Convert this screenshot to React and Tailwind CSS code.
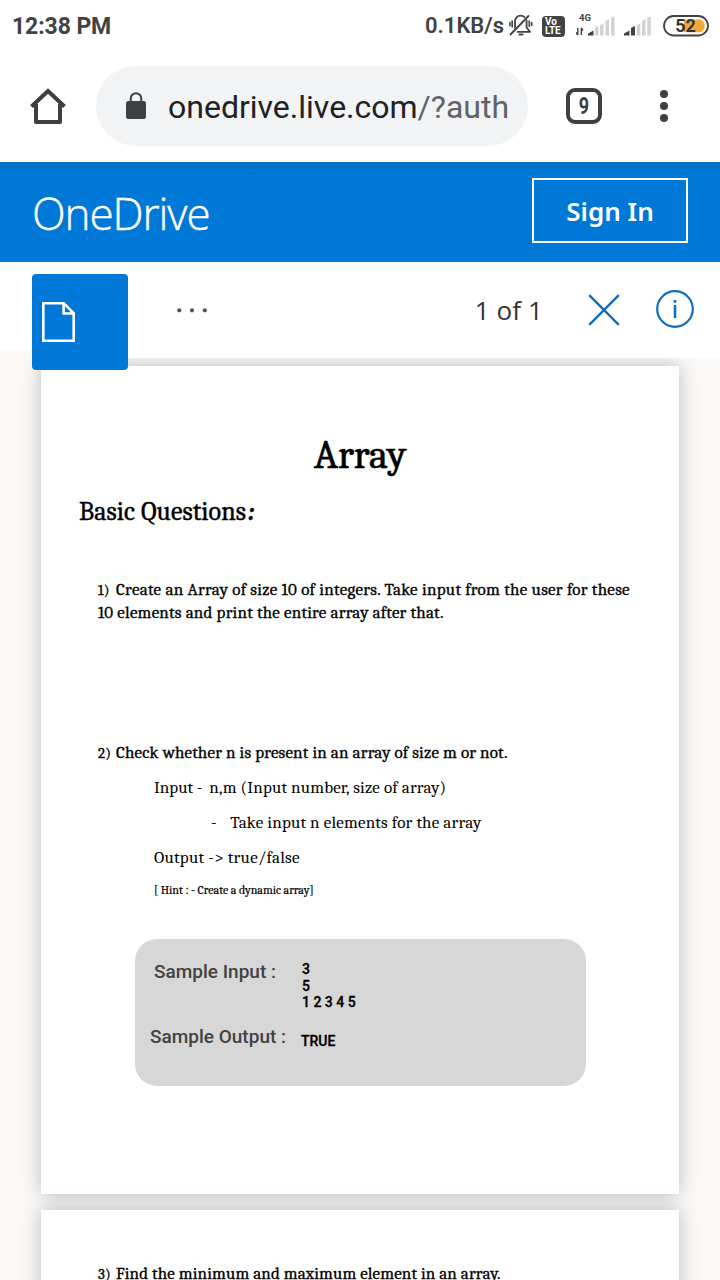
function StatusBar() {
  return (
    <div className="flex h-[52px] shrink-0 items-center pl-[12px] pr-[11px] font-['Roboto',sans-serif] font-medium text-[#424242]">
      <span className="text-[23px] font-bold leading-none tracking-[-0.1px]">12:38 PM</span>
      <span className="ml-auto text-[22px] font-semibold leading-none">0.1KB/s</span>
      <svg width="24" height="24" viewBox="0 0 24 24" className="-mt-[2px] ml-[5px] block" fill="none" stroke="#424242" strokeWidth="1.8" strokeLinecap="round" strokeLinejoin="round">
        <path d="M1.500 21.500 19.500 3" />
        <path d="M15.500 4.200C14.500 3.200 13 2.700 11.700 2.700 8.200 2.700 6 5.300 6 8.500V15M17.600 7.500v7l3.400 4.300H8.500" />
        <path d="M3.200 8v6M1 9.500v3.200M20.300 8v5.500M22.700 9.500v3" strokeWidth="1.600" />
        <path d="M10.500 21.500h3" strokeWidth="2.200" />
      </svg>
      <span className="ml-[9px] flex h-[21px] w-[23px] flex-col items-start justify-center rounded-[4px] bg-[#424242] pl-[3px] text-[10px] font-bold leading-[9px] text-white">
        <span>Vo</span>
        <span className="tracking-[-0.3px]">LTE</span>
      </span>
      <svg width="40" height="28" viewBox="0 0 40 28" className="-mt-[7px] ml-[11px] block">
        <text x="3" y="12" fontSize="9.500" fontWeight="700" fill="#424242" fontFamily="Roboto">4G</text>
        <path d="M1.800 19v7M0 23.500l1.800 2.500M5.300 26v-7M7 21.500l-1.800-2.500" stroke="#424242" strokeWidth="1.400" fill="none" />
        <path d="M12 26.500v-2l5.500-3v5z" fill="#424242" />
        <path d="M19 26.500v-8l3.500-1.500v9.500zM24 26.500v-10.500l3.500-1.500v12zM29.500 26.500v-14.500l3.500-2v16.500zM35 26.500v-17.500l3.500-2v19.500z" fill="#d2d2d2" />
      </svg>
      <svg width="28" height="28" viewBox="0 0 28 28" className="-mt-[7px] ml-[8px] block">
        <path d="M0 26.500v-2l5.500-3v5zM7 26.500v-7.500l4-2v9.500z" fill="#424242" />
        <path d="M12.800 26.500v-10.500l3.500-1.500v12zM18 26.500v-14.500l3.500-2v16.500zM23.300 26.500v-17.500l3.500-2v19.500z" fill="#d2d2d2" />
      </svg>
      <svg width="46" height="22" viewBox="0 0 46 22" className="-mt-[1px] ml-[11px] block">
        <path d="M21 4.500h14.500a6.400 6.400 0 0 1 0 12.800H21z" fill="#f5a934" />
        <rect x="1" y="1" width="44" height="19.500" rx="9.750" fill="none" stroke="#424242" strokeWidth="1.800" />
        <text x="22.500" y="17" textAnchor="middle" fontSize="18" fontWeight="700" fill="#333" fontFamily="Roboto">52</text>
      </svg>
    </div>
  );
}

function BrowserBar() {
  return (
    <div className="flex h-[110px] shrink-0 items-start pl-[30px] pt-[14px]">
      <svg width="36" height="38" viewBox="0 0 36 38" className="mt-[21px] block" fill="none" stroke="#3c4043" strokeWidth="4" strokeLinejoin="round">
        <path d="M1.500 19.500 18 4 34.500 19.500" strokeLinejoin="miter" />
        <path d="M6 17v18h24V17" />
      </svg>
      <div className="ml-[30px] flex h-[80px] w-[432px] items-center rounded-full bg-[#f1f3f4] pl-[30px]">
        <svg width="20" height="28" viewBox="0 0 20 28" className="block">
          <path d="M4.800 10V6.500a5.200 5.200 0 0 1 10.400 0V10" fill="none" stroke="#3c4043" strokeWidth="2" />
          <rect y="9" width="20" height="18" rx="2.500" fill="#3c4043" />
        </svg>
        <span className="ml-[22px] mt-[2px] whitespace-nowrap font-['Roboto',sans-serif] text-[32px] leading-none text-[#202124]">
          onedrive.live.com<span className="text-[#5f6368]">/?auth</span>
        </span>
      </div>
      <div className="ml-[38px] mt-[22px] flex h-[36px] w-[36px] items-center justify-center rounded-[9px] border-4 border-[#3c4043] font-['Roboto',sans-serif] text-[24px] font-bold leading-none text-[#3c4043]">
        <span className="inline-block scale-x-75">9</span>
      </div>
      <svg width="8" height="32" viewBox="0 0 8 32" className="ml-[58px] mt-[24px] block" fill="#3c4043">
        <circle cx="4" cy="4" r="4" />
        <circle cx="4" cy="16" r="4" />
        <circle cx="4" cy="28" r="4" />
      </svg>
    </div>
  );
}

function SiteHeader() {
  return (
    <div className="flex h-[100px] shrink-0 items-center justify-between bg-[#0078d7] bg-linear-to-b from-[#006bbf] via-[#0078d7] via-10% to-[#0078d7] px-8 text-white">
      <span className="mt-[2px] font-['Open_Sans',sans-serif] text-[44px] font-light leading-none tracking-[-1.1px] [-webkit-text-stroke:0.4px_#fff]">OneDrive</span>
      <button className="mb-[3px] flex h-[65px] w-[156px] items-center justify-center border-2 border-white font-['Noto_Sans',sans-serif] text-[26px] font-semibold leading-none">
        Sign In
      </button>
    </div>
  );
}

function Toolbar() {
  return (
    <div className="relative z-10 flex h-[96px] shrink-0">
      <div className="h-[88px] w-[128px] bg-white pl-8 pt-3">
        <div className="flex h-24 w-24 items-center rounded-[4px] bg-[#0078d7] pl-[10px]">
          <svg width="33" height="40" viewBox="0 0 33 40" className="block" fill="none" stroke="#fff" strokeWidth="2.600">
            <path d="M1.300 1.300h20.500L31.700 11.200v27.500H1.300zM21.600 1.300v10.200h10" />
          </svg>
        </div>
      </div>
      <div className="flex flex-1 items-center bg-white pl-[48px] pr-[26px]">
        <svg width="32" height="5" viewBox="0 0 32 5" className="block" fill="#555">
          <circle cx="3.300" cy="2.300" r="2.100" />
          <circle cx="16" cy="2.300" r="2.100" />
          <circle cx="28.800" cy="2.300" r="2.100" />
        </svg>
        <span className="ml-auto font-['Open_Sans',sans-serif] text-[26px] leading-none tracking-[0.1px] text-[#333]">1 of 1</span>
        <svg width="32" height="32" viewBox="0 0 32 32" className="ml-[45px] block" stroke="#106ebe" strokeWidth="2.400">
          <path d="M1.200 1.200 30.800 30.800M30.800 1.200 1.200 30.800" />
        </svg>
        <svg width="38" height="38" viewBox="0 0 38 38" className="-mt-[3px] ml-[36px] block" fill="none" stroke="#106ebe" strokeWidth="2.200">
          <circle cx="19" cy="19" r="17.800" />
          <path d="M19 15v13M19 10v2.800" strokeWidth="2.600" />
        </svg>
      </div>
    </div>
  );
}

function ItemNumber({ children }) {
  return <span className="ml-px inline-block w-[18px] text-[15px] leading-none">{children}</span>;
}

function Document() {
  return (
    <div className="-mt-2 flex flex-1 flex-col items-center gap-4 bg-[#faf9f8] pt-4">
      <div className="h-[828px] w-[638px] shrink-0 bg-white font-['Cambria','Caladea','Liberation_Serif',serif] text-black shadow-[0_0_18px_rgba(0,0,0,0.26)]">
        <h1 className="pl-[273px] pt-[65px] text-[40px] leading-[48px] [-webkit-text-stroke:0.6px_#000]">Array</h1>
        <h2 className="mt-[17px] pl-[38px] text-[26px] leading-[32px] tracking-[0.1px] [-webkit-text-stroke:0.4px_#000]">
          Basic Questions<i className="ml-[3px] font-bold">:</i>
        </h2>
        <div className="mt-[50px] whitespace-nowrap pl-[56px] text-[17px] leading-[23px] [-webkit-text-stroke:0.3px_#000]">
          <p className="tracking-[0.29px]"><ItemNumber>1)</ItemNumber>Create an Array of size 10 of integers. Take input from the user for these</p>
          <p className="pl-px tracking-[0.22px]">10 elements and print the entire array after that.</p>
        </div>
        <p className="mt-[117px] pl-[56px] text-[17px] leading-[24px] tracking-[0.18px] [-webkit-text-stroke:0.3px_#000]"><ItemNumber>2)</ItemNumber>Check whether n is present in an array of size m or not.</p>
        <p className="mt-[11px] pl-[113px] text-[17px] leading-[24px] tracking-[0.18px]"><span className="tracking-normal">Input -</span><span className="ml-[7px]">n,m (Input number, size of array)</span></p>
        <p className="mt-[11px] pl-[170px] text-[17px] leading-[24px] tracking-[0.2px]"><span>-</span><span className="ml-[13.500px]">Take input n elements for the array</span></p>
        <p className="mt-[11px] pl-[113px] text-[17px] leading-[24px] tracking-[0.27px]">Output -&gt; true/false</p>
        <p className="mt-[8px] pl-[113px] text-[12px] leading-[24px] tracking-[-0.04px] [-webkit-text-stroke:0.2px_#000]">[ Hint : - Create a dynamic array]</p>
        <div className="ml-[94px] mt-[37px] h-[147px] w-[451px] rounded-[22px] bg-[#d7d7d7] pt-[22px] font-['Roboto',sans-serif] font-medium">
          <div className="flex h-[65px]">
            <span className="w-[167px] pl-[19px] text-[19px] leading-[21px] text-[#424242]">Sample Input :</span>
            <div className="text-[14px] leading-[16.500px] [-webkit-text-stroke:0.3px_#000]">
              <p>3</p>
              <p>5</p>
              <p>1 2 3 4 5</p>
            </div>
          </div>
          <div className="flex">
            <span className="w-[166px] pl-[15px] text-[19px] leading-[21px] text-[#424242]">Sample Output :</span>
            <span className="pt-[7px] text-[14px] leading-[17px] [-webkit-text-stroke:0.3px_#000]">TRUE</span>
          </div>
        </div>
      </div>
      <div className="h-[828px] w-[638px] shrink-0 bg-white pl-[56px] pt-[52px] font-['Cambria','Caladea','Liberation_Serif',serif] text-[17px] leading-[24px] tracking-[0.13px] text-black shadow-[0_0_18px_rgba(0,0,0,0.26)] [-webkit-text-stroke:0.3px_#000]">
        <ItemNumber>3)</ItemNumber>Find the minimum and maximum element in an array.
      </div>
    </div>
  );
}

export default function App() {
  return (
    <div className="flex h-[1280px] w-[720px] flex-col overflow-hidden bg-white">
      <StatusBar />
      <BrowserBar />
      <SiteHeader />
      <Toolbar />
      <Document />
    </div>
  );
}
